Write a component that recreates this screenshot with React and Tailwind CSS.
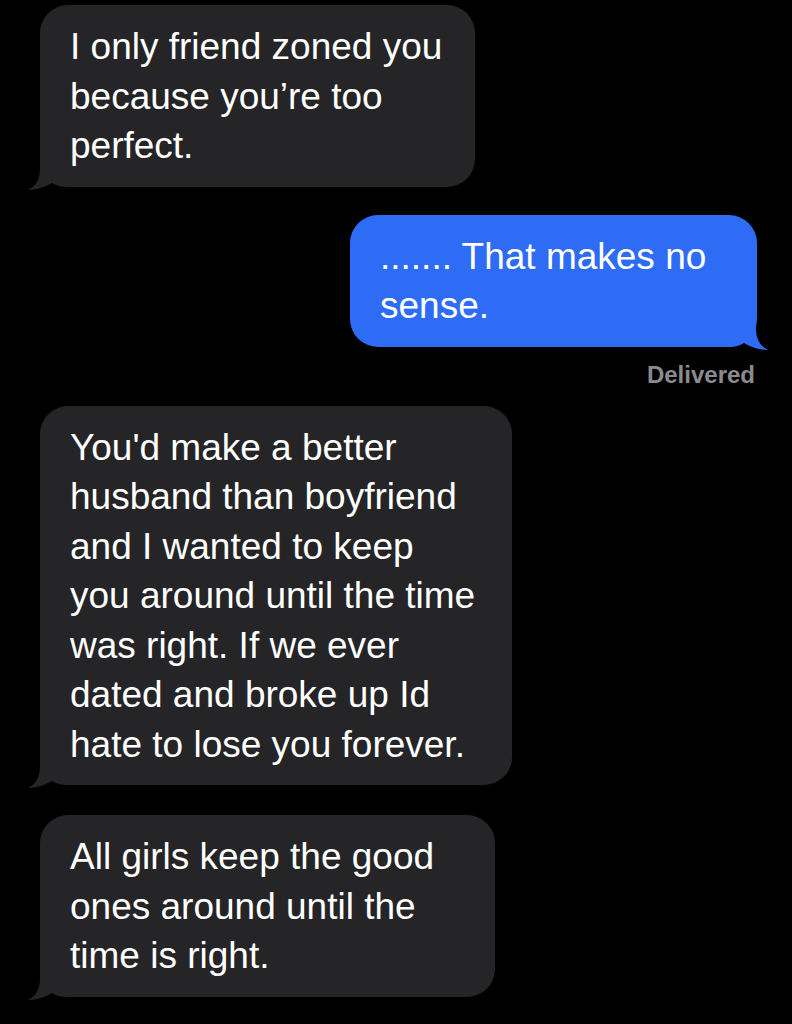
import React from 'react';

const messages = [
    { id: 1, from: 'them', width: 'w-[435px]', gap: 'mt-[5px]', lines: ['I only friend zoned you', 'because you’re too', 'perfect.'] },
    { id: 2, from: 'me', width: 'w-[407px]', gap: 'mt-[28px]', lines: ['....... That makes no', 'sense.'] },
    {
        id: 3,
        from: 'them',
        width: 'w-[472px]',
        gap: 'mt-[17px]',
        lines: [
            "You'd make a better",
            'husband than boyfriend',
            'and I wanted to keep',
            'you around until the time',
            'was right. If we ever',
            'dated and broke up Id',
            'hate to lose you forever.',
        ],
    },
    { id: 4, from: 'them', width: 'w-[455px]', gap: 'mt-[30px]', lines: ['All girls keep the good', 'ones around until the', 'time is right.'] },
];

// little curled tail under the bubble corner
const Tail = ({ color, flip }) => (
    <svg
        width="40"
        height="36"
        viewBox="0 0 40 36"
        className={`absolute bottom-[-3px] ${flip ? 'right-[-11px] -scale-x-100' : 'left-[-12px]'}`}
    >
        <path d="M12 0 L12 14 C12 25 8 32 0 36 C9 36 17 33 24 29 C29 32 34 33 40 33 L40 0 Z" fill={color} />
    </svg>
);

const Bubble = ({ msg }) => {
    const mine = msg.from === 'me';
    const color = mine ? '#2f6cf5' : '#252527';
    return (
        <div
            className={`relative ${msg.width} ${msg.gap} ${mine ? 'self-end mr-[35px] bg-[#2f6cf5]' : 'ml-[40px] bg-[#252527]'} rounded-[28px] pl-[30px] pt-[17px] pb-[16px]`}
        >
            <div className="relative text-[37px] leading-[49.5px] text-white">
                {msg.lines.map((line, i) => (
                    <div key={i} className="whitespace-nowrap">{line}</div>
                ))}
            </div>
            <Tail color={color} flip={mine} />
        </div>
    );
};

export default function App() {
    return (
        <div
            className="w-[792px] h-[1024px] overflow-hidden bg-black flex flex-col antialiased"
            style={{ fontFamily: '"Liberation Sans", Arial, sans-serif' }}
        >
            {messages.slice(0, 2).map((m) => (
                <Bubble key={m.id} msg={m} />
            ))}
            <div className="self-end mr-[37px] mt-[13px] text-[24px] leading-[29px] font-bold text-[#8b8b8f]">
                Delivered
            </div>
            {messages.slice(2).map((m) => (
                <Bubble key={m.id} msg={m} />
            ))}
        </div>
    );
}
